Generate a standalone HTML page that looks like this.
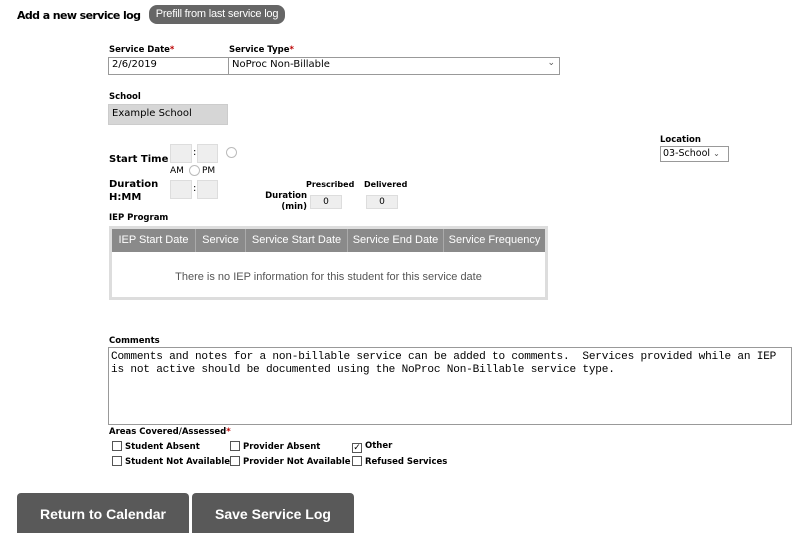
<!DOCTYPE html><html><head><style>
body{margin:0;width:800px;height:528px;background:#fff;position:relative;overflow:hidden;font-family:"DejaVu Sans","Liberation Sans",sans-serif;color:#000}
.a{position:absolute;white-space:nowrap}
.l{font-size:8.5px;font-weight:bold;font-family:"DejaVu Sans",sans-serif}
.r{color:#b00}
.in{position:absolute;border:1px solid #999;box-sizing:border-box;font-size:10px;font-family:"DejaVu Sans",sans-serif;padding:3px 3px;background:#fff;white-space:nowrap}
.sb{position:absolute;background:#eee;border:1px solid #ddd;box-sizing:border-box}
.rad{position:absolute;width:9px;height:9px;border:1px solid #bbb;border-radius:50%}
.cb{display:inline-block;width:10px;height:10px;border:1px solid #555;vertical-align:-2px;margin-right:3px;position:relative;box-sizing:border-box}
.th{position:absolute;top:0;height:23px;line-height:23px;color:#fff;font-size:11px;font-family:"Liberation Sans",sans-serif;text-align:center;border-right:1px solid #aaa;box-sizing:border-box}
.btn{position:absolute;background:#595959;color:#fff;font:bold 14px "Liberation Sans",sans-serif;text-align:center;border-radius:4px 4px 0 0}
.cbl{position:absolute;font-size:8.5px;font-weight:bold}
</style></head><body>
<div class="a" style="left:17px;top:9px;font-size:11px;font-weight:bold;letter-spacing:-0.6px">Add a new service log</div>
<div class="a" style="left:149px;top:5px;width:136px;height:19px;background:#666;border-radius:8px;color:#fff;font-family:'Liberation Sans',sans-serif;font-size:11px;line-height:19px;text-align:center;letter-spacing:-0.2px">Prefill from last service log</div>
<div class="a l" style="left:109px;top:45px">Service Date<span class="r">*</span></div>
<div class="a l" style="left:229px;top:45px">Service Type<span class="r">*</span></div>
<div class="in" style="left:108px;top:57px;width:121px;height:18px;padding:1px 3px">2/6/2019</div>
<div class="in" style="left:228px;top:57px;width:332px;height:18px;padding:1px 3px">NoProc Non-Billable<span style="position:absolute;right:4px;top:0;font-size:9px;color:#555">&#8964;</span></div>
<div class="a l" style="left:109px;top:92px">School</div>
<div class="in" style="left:108px;top:104px;width:120px;height:21px;background:#d6d6d6;border-color:#ccc">Example School</div>
<div class="a l" style="left:660px;top:135px">Location</div>
<div class="in" style="left:660px;top:146px;width:69px;height:16px;padding:1px 2px;font-size:9.5px">03-School <span style="font-size:8px;color:#555">&#8964;</span></div>
<div class="a l" style="left:109px;top:154px;font-size:10px">Start Time</div>
<div class="sb" style="left:170px;top:144px;width:22px;height:19px"></div><div class="a" style="left:193px;top:147px;font-size:10px">:</div>
<div class="sb" style="left:197px;top:144px;width:21px;height:19px"></div>
<div class="rad" style="left:226px;top:147px"></div>
<div class="a" style="left:170px;top:166px;font-size:9px">AM</div><div class="rad" style="left:189px;top:165px"></div><div class="a" style="left:202px;top:166px;font-size:9px">PM</div>
<div class="a l" style="left:109px;top:178px;font-size:10px;line-height:13px">Duration<br>H:MM</div>
<div class="sb" style="left:170px;top:180px;width:22px;height:19px"></div><div class="a" style="left:193px;top:183px;font-size:10px">:</div>
<div class="sb" style="left:197px;top:180px;width:21px;height:19px"></div>
<div class="a l" style="left:306px;top:180px;font-size:8px">Prescribed</div><div class="a l" style="left:364px;top:180px;font-size:8px">Delivered</div>
<div class="a l" style="left:252px;top:191px;width:55px;text-align:right;line-height:11px">Duration<br>(min)</div>
<div class="sb" style="left:310px;top:195px;width:32px;height:14px;font-size:9px;text-align:center;line-height:12px">0</div>
<div class="sb" style="left:366px;top:195px;width:32px;height:14px;font-size:9px;text-align:center;line-height:12px">0</div>
<div class="a l" style="left:109px;top:213px">IEP Program</div>
<div class="a" style="left:109px;top:226px;width:439px;height:74px;border:3px solid #ddd;box-sizing:border-box;background:#fff">
<div class="a" style="left:0;top:0;width:433px;height:23px;background:#8a8a8a">
<div class="th" style="left:0;width:84px">IEP Start Date</div>
<div class="th" style="left:84px;width:50px">Service</div>
<div class="th" style="left:134px;width:102px">Service Start Date</div>
<div class="th" style="left:236px;width:96px">Service End Date</div>
<div class="th" style="left:332px;width:101px;border:0">Service Frequency</div></div>
<div class="a" style="left:0;top:42px;width:433px;text-align:center;font-size:11px;font-family:'Liberation Sans',sans-serif;color:#555">There is no IEP information for this student for this service date</div></div>
<div class="a l" style="left:109px;top:336px">Comments</div>
<div class="a" style="left:108px;top:347px;width:684px;height:78px;border:1px solid #999;box-sizing:border-box;font-family:'Liberation Mono',monospace;font-size:11.1px;letter-spacing:-0.2px;line-height:13px;padding:3px 2px;white-space:pre;overflow:hidden">Comments and notes for a non-billable service can be added to comments.  Services provided while an IEP
is not active should be documented using the NoProc Non-Billable service type.</div>
<div class="a l" style="left:109px;top:427px">Areas Covered/Assessed<span class="r">*</span></div>
<div class="cbl" style="left:112px;top:441px"><span class="cb"></span>Student Absent</div>
<div class="cbl" style="left:230px;top:441px"><span class="cb"></span>Provider Absent</div>
<div class="cbl" style="left:352px;top:441px"><span class="cb" style="text-align:center;font-size:9px;line-height:9px;font-weight:normal">&#10003;</span>Other</div>
<div class="cbl" style="left:112px;top:456px"><span class="cb"></span>Student Not Available</div>
<div class="cbl" style="left:230px;top:456px"><span class="cb"></span>Provider Not Available</div>
<div class="cbl" style="left:352px;top:456px"><span class="cb"></span>Refused Services</div>
<div class="btn" style="left:17px;top:493px;width:172px;height:40px;line-height:43px">Return to Calendar</div>
<div class="btn" style="left:192px;top:493px;width:162px;height:40px;line-height:43px">Save Service Log</div>
</body></html>
